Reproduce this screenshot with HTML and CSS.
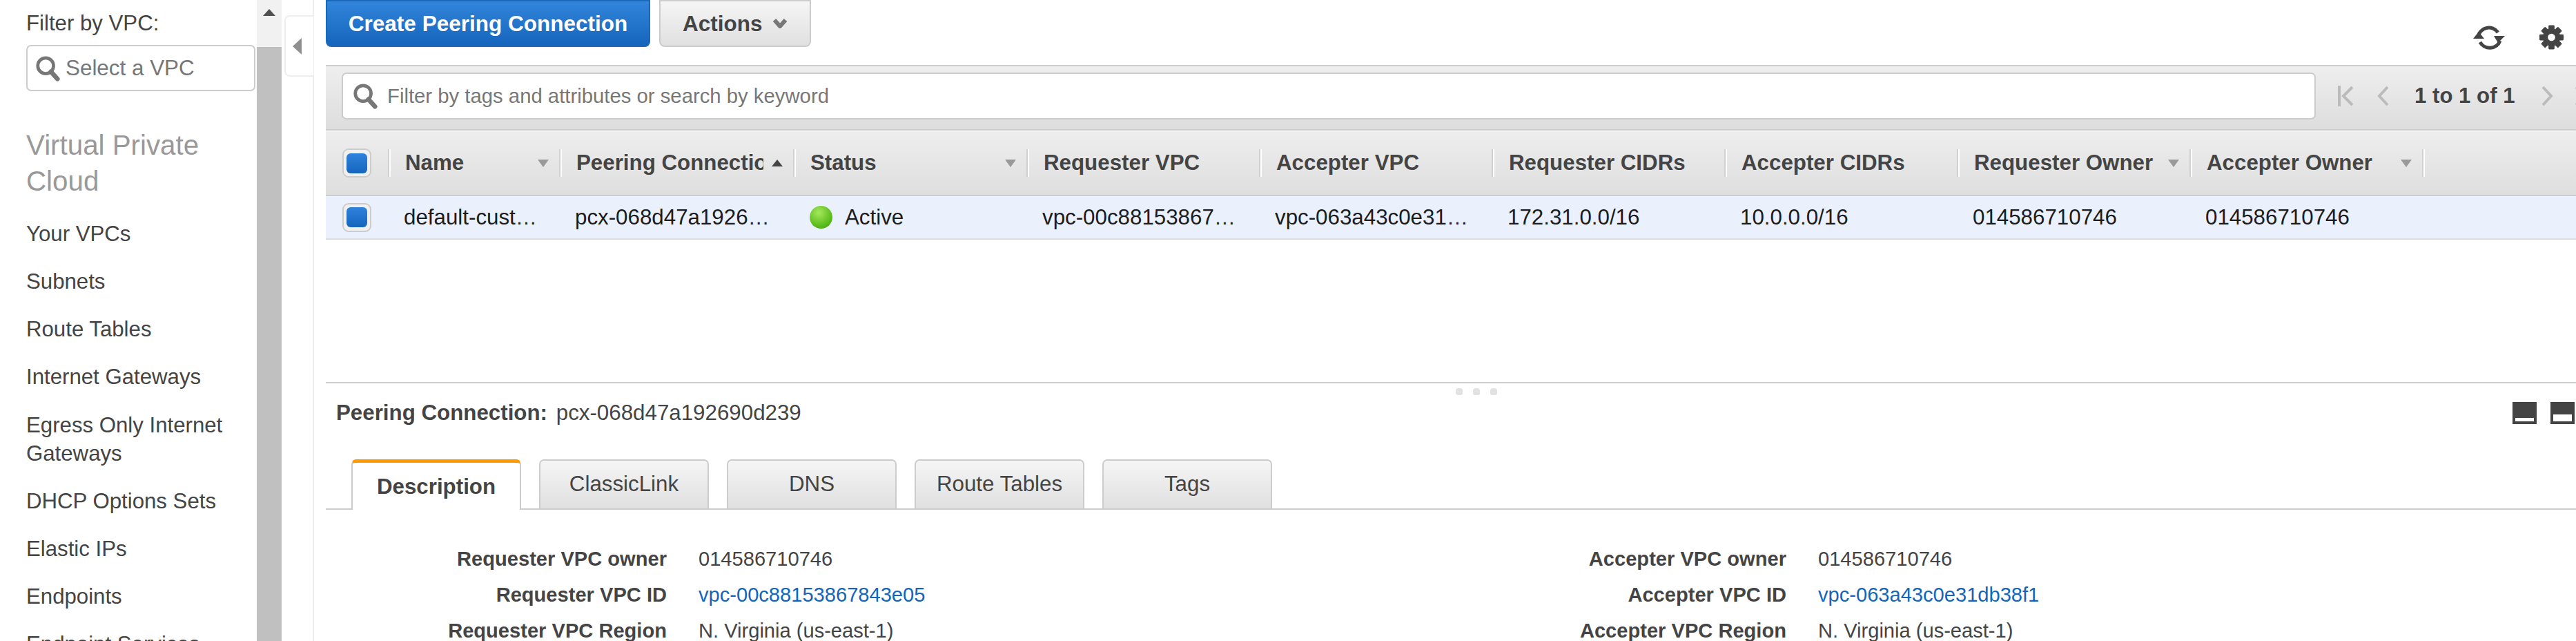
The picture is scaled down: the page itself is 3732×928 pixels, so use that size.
FILE: index.html
```html
<!DOCTYPE html>
<html lang="en">
<head>
  <meta charset="UTF-8" />
  <title>Peering Connections</title>
  <link rel="stylesheet" href="styles.css">
</head>
<body>
  <div class="app">

    <!-- left navigation -->
    <aside class="sidebar">
      <div class="nav">
        <div class="filter-label">Filter by VPC:</div>
        <div class="vpc-select">
          <svg class="search-icon" viewBox="0 0 40 40"><circle cx="17" cy="16" r="12" /><line x1="25" y1="25" x2="35" y2="36" /></svg>
          <span>Select a VPC</span>
        </div>
        <h2 class="nav-title">Virtual Private Cloud</h2>
        <a class="nav-item">Your VPCs</a>
        <a class="nav-item">Subnets</a>
        <a class="nav-item">Route Tables</a>
        <a class="nav-item">Internet Gateways</a>
        <a class="nav-item">Egress Only Internet Gateways</a>
        <a class="nav-item">DHCP Options Sets</a>
        <a class="nav-item">Elastic IPs</a>
        <a class="nav-item">Endpoints</a>
        <a class="nav-item">Endpoint Services</a>
      </div>
      <div class="scrollbar">
        <div class="scroll-up"></div>
        <div class="scroll-thumb"></div>
      </div>
    </aside>

    <div class="gutter">
      <div class="collapse-handle"><span class="collapse-arrow"></span></div>
    </div>

    <main class="main">
      <!-- action buttons -->
      <div class="topbar">
        <button class="btn btn-primary">Create Peering Connection</button>
        <button class="btn btn-actions">Actions
          <svg class="chevron" viewBox="0 0 22 14"><polyline points="3,2 11,11 19,2" /></svg>
        </button>
        <div class="top-icons">
          <svg class="refresh-icon" viewBox="0 0 48 38">
            <path class="arc" d="M8 19 A16 16 0 0 1 37 12" />
            <path class="arc" d="M40 24 A16 16 0 0 1 11 26" />
            <polygon points="31,17 47,17 37,27" />
            <polygon points="1,21 17,21 9,11" />
          </svg>
          <svg class="gear-icon" viewBox="0 0 36 36">
            <rect x="13.5" y="0" width="9" height="36" rx="1.5" />
            <rect x="13.5" y="0" width="9" height="36" rx="1.5" transform="rotate(45 18 18)" />
            <rect x="13.5" y="0" width="9" height="36" rx="1.5" transform="rotate(90 18 18)" />
            <rect x="13.5" y="0" width="9" height="36" rx="1.5" transform="rotate(135 18 18)" />
            <circle cx="18" cy="18" r="13" />
            <circle class="gear-hole" cx="18" cy="18" r="5.5" />
          </svg>
        </div>
      </div>

      <!-- search and pager -->
      <div class="toolbar">
        <div class="search-box">
          <svg class="search-icon" viewBox="0 0 40 40"><circle cx="17" cy="16" r="12" /><line x1="25" y1="25" x2="35" y2="36" /></svg>
          <span>Filter by tags and attributes or search by keyword</span>
        </div>
        <div class="pager">
          <svg class="page-first" viewBox="0 0 23 30"><line x1="2" y1="0" x2="2" y2="30" /><polyline points="21,2 8,15 21,28" /></svg>
          <svg class="page-step" viewBox="0 0 17 30"><polyline points="15,2 3,15 15,28" /></svg>
          <span class="page-text">1 to 1 of 1</span>
          <svg class="page-step" viewBox="0 0 17 30"><polyline points="2,2 14,15 2,28" /></svg>
          <svg class="page-first" viewBox="0 0 23 30"><polyline points="2,2 15,15 2,28" /><line x1="21" y1="0" x2="21" y2="30" /></svg>
        </div>
      </div>

      <!-- table -->
      <div class="grid-row table-head">
        <div class="check-cell"><span class="check"></span></div>
        <div class="th"><span class="th-label">Name</span><span class="caret"></span></div>
        <div class="th"><span class="th-label">Peering Connection ID</span><span class="caret caret-up"></span></div>
        <div class="th"><span class="th-label">Status</span><span class="caret"></span></div>
        <div class="th"><span class="th-label">Requester VPC</span></div>
        <div class="th"><span class="th-label">Accepter VPC</span></div>
        <div class="th"><span class="th-label">Requester CIDRs</span></div>
        <div class="th"><span class="th-label">Accepter CIDRs</span></div>
        <div class="th"><span class="th-label">Requester Owner</span><span class="caret"></span></div>
        <div class="th"><span class="th-label">Accepter Owner</span><span class="caret"></span></div>
        <div class="th"></div>
      </div>
      <div class="grid-row table-row">
        <div class="check-cell"><span class="check"></span></div>
        <div class="td">default-cust…</div>
        <div class="td">pcx-068d47a1926…</div>
        <div class="td status"><span class="status-dot"></span>Active</div>
        <div class="td">vpc-00c88153867…</div>
        <div class="td">vpc-063a43c0e31…</div>
        <div class="td">172.31.0.0/16</div>
        <div class="td">10.0.0.0/16</div>
        <div class="td">014586710746</div>
        <div class="td">014586710746</div>
      </div>
      <div class="table-space"></div>

      <!-- details pane -->
      <section class="details">
        <div class="drag-dots"><span></span><span></span><span></span></div>
        <div class="details-head">
          <div><b>Peering Connection:</b> pcx-068d47a192690d239</div>
          <div class="layout-icons">
            <span class="layout-btn layout-min"></span>
            <span class="layout-btn layout-half"></span>
          </div>
        </div>
        <div class="tabs">
          <div class="tab tab-active">Description</div>
          <div class="tab">ClassicLink</div>
          <div class="tab">DNS</div>
          <div class="tab">Route Tables</div>
          <div class="tab">Tags</div>
        </div>
        <div class="fields">
          <div class="field"><span class="field-label">Requester VPC owner</span><span>014586710746</span></div>
          <div class="field"><span class="field-label">Accepter VPC owner</span><span>014586710746</span></div>
          <div class="field"><span class="field-label">Requester VPC ID</span><a class="link">vpc-00c88153867843e05</a></div>
          <div class="field"><span class="field-label">Accepter VPC ID</span><a class="link">vpc-063a43c0e31db38f1</a></div>
          <div class="field"><span class="field-label">Requester VPC Region</span><span>N. Virginia (us-east-1)</span></div>
          <div class="field"><span class="field-label">Accepter VPC Region</span><span>N. Virginia (us-east-1)</span></div>
        </div>
      </section>
    </main>
  </div>
</body>
</html>
```

FILE: styles.css
```css
html, body {
  margin: 0;
  height: 100%;
  overflow: hidden;
}

body {
  font-family: "Liberation Sans", Arial, sans-serif;
  font-size: 29.1px;
  color: #444;
  background: #fff;
}

.app {
  display: flex;
  height: 928px;
  overflow: hidden;
}

/* sidebar */
.sidebar {
  display: flex;
  flex: none;
  width: 408px;
  height: 100%;
}

.nav {
  width: 372px;
  box-sizing: border-box;
  padding: 13px 0 0 38px;
  overflow: hidden;
  font-size: 31.2px;
  line-height: 41px;
}

.vpc-select {
  display: flex;
  align-items: center;
  gap: 7px;
  box-sizing: border-box;
  width: 332px;
  height: 67px;
  margin-top: 11px;
  padding-left: 10px;
  border: 2px solid #ccc;
  border-radius: 7px;
  color: #777;
  font-size: 31.4px;
}

.nav-title {
  margin: 53px 0 28.8px;
  font-size: 40.3px;
  font-weight: normal;
  line-height: 52px;
  color: #999;
}

.nav-item {
  display: block;
  margin-bottom: 28.2px;
  padding-right: 30px;
}

.scrollbar {
  display: flex;
  flex-direction: column;
  width: 36px;
  background: #f1f1f1;
}

.scroll-up {
  flex: none;
  width: 0;
  height: 0;
  margin: 13px auto 45px;
  border-left: 9px solid transparent;
  border-right: 9px solid transparent;
  border-bottom: 10px solid #505050;
}

.scroll-thumb {
  flex: 1;
  background: #c0c0c0;
}

.gutter {
  flex: none;
  width: 47px;
  padding-top: 22px;
  box-sizing: border-box;
  border-right: 2px solid #eee;
}

.collapse-handle {
  display: flex;
  align-items: center;
  justify-content: center;
  box-sizing: border-box;
  width: 42px;
  height: 89px;
  margin-left: 4px;
  border: 2px solid #eee;
  border-right: none;
  border-radius: 8px 0 0 8px;
  background: #fff;
}

.collapse-arrow {
  width: 0;
  height: 0;
  margin-right: 8px;
  border-top: 12px solid transparent;
  border-bottom: 12px solid transparent;
  border-right: 13px solid #8f8f8f;
}

/* main column */
.main {
  flex: 1;
  min-width: 0;
  padding-left: 17px;
}

.topbar {
  display: flex;
  height: 94px;
}

.btn {
  box-sizing: border-box;
  height: 68px;
  padding: 0;
  border-radius: 0 0 8px 8px;
  font-family: inherit;
  font-size: 31.5px;
  font-weight: bold;
}

.btn-primary {
  width: 470px;
  border: 2px solid #1b67b8;
  background: linear-gradient(#3285dc, #1565bc);
  color: #fff;
}

.btn-actions {
  display: flex;
  align-items: center;
  width: 220px;
  margin-left: 13px;
  padding-left: 32px;
  border: 2px solid #ccc;
  background: linear-gradient(#f5f5f5, #e0e0e0);
  color: #444;
}

.chevron {
  width: 22px;
  height: 14px;
  margin-left: 14px;
  fill: none;
  stroke: #777;
  stroke-width: 6;
}

.top-icons {
  display: flex;
  align-items: center;
  gap: 49px;
  height: 36px;
  margin-left: auto;
  margin-right: 18px;
  padding-top: 36px;
}

.refresh-icon {
  width: 48px;
  height: 38px;
  fill: #444;
}

.refresh-icon .arc {
  fill: none;
  stroke: #444;
  stroke-width: 5;
}

.gear-icon {
  width: 35px;
  height: 36px;
  fill: #444;
}

.gear-icon .gear-hole {
  fill: #fff;
}

.toolbar {
  display: flex;
  align-items: center;
  box-sizing: border-box;
  height: 95px;
  padding: 0 0 5px 23px;
  border-top: 2px solid #ccc;
  border-bottom: 2px solid #ccc;
  background: linear-gradient(#eee, #ddd);
}

.search-box {
  display: flex;
  flex: none;
  align-items: center;
  gap: 13px;
  box-sizing: border-box;
  width: 2860px;
  height: 68px;
  padding-left: 13px;
  border: 2px solid #ccc;
  border-radius: 7px;
  background: #fff;
  color: #777;
  font-size: 29.3px;
}

.search-icon {
  flex: none;
  width: 38px;
  height: 38px;
  fill: none;
  stroke: #777;
}

.search-icon circle {
  stroke-width: 5;
}

.search-icon line {
  stroke-width: 7;
  stroke-linecap: round;
}

.pager {
  display: flex;
  flex: none;
  align-items: center;
  margin-left: 32px;
  font-size: 31.2px;
  font-weight: bold;
  white-space: nowrap;
}

.pager svg {
  flex: none;
  height: 30px;
  fill: none;
  stroke: #bbb;
  stroke-width: 4;
}

.page-first {
  width: 23px;
  margin-right: 34px;
}

.page-step {
  width: 17px;
}

.page-text {
  margin: 0 38px 0 37px;
}

.page-text + .page-step {
  margin-right: 31px;
}

/* table */
.grid-row {
  display: grid;
  grid-template-columns: 90px 248px 339px 338px repeat(6, 337px) 40px;
  align-items: center;
  font-size: 31.3px;
  white-space: nowrap;
}

.table-head {
  box-sizing: border-box;
  height: 94px;
  margin-top: 1px;
  border-bottom: 2px solid #ccc;
  background: linear-gradient(#eee, #dedede);
  font-weight: bold;
}

.table-row {
  box-sizing: border-box;
  height: 63px;
  border-bottom: 2px solid #ddd;
  background: #eaf1fc;
  color: #1c1c1c;
}

.check-cell {
  padding-left: 24px;
}

.check {
  display: flex;
  align-items: center;
  justify-content: center;
  box-sizing: border-box;
  width: 42px;
  height: 42px;
  border: 2px solid #ccc;
  border-radius: 9px;
  background: #f0f0f0;
}

.check::after {
  content: "";
  width: 30px;
  height: 29px;
  border-radius: 6px;
  background: linear-gradient(#2f82dc, #1565bc);
}

.th {
  display: flex;
  align-items: center;
  box-sizing: border-box;
  height: 40px;
  padding: 0 15px 0 23px;
  border-left: 2px solid #d0d0d0;
  box-shadow: inset 2px 0 #fff;
}

.th-label {
  flex: 1;
  min-width: 0;
  overflow: hidden;
}

.caret {
  flex: none;
  width: 0;
  height: 0;
  margin-left: 12px;
  border-left: 8px solid transparent;
  border-right: 8px solid transparent;
  border-top: 11px solid #999;
}

.caret-up {
  border-top: none;
  border-bottom: 10px solid #444;
}

.td {
  padding-left: 23px;
}

.status {
  display: flex;
  align-items: center;
  padding-left: 24px;
}

.status-dot {
  width: 33px;
  height: 33px;
  margin-right: 18px;
  border-radius: 50%;
  background: radial-gradient(circle at 40% 30%, #a4e85c, #58bb1a 65%, #3e9a10);
}

.table-space {
  height: 206px;
}

/* details pane */
.details {
  position: relative;
  border-top: 2px solid #ccc;
}

.drag-dots {
  position: absolute;
  top: 7px;
  left: 1637px;
  display: flex;
  gap: 15px;
}

.drag-dots span {
  width: 10px;
  height: 10px;
  border-radius: 4px 4px 3px 3px;
  background: #e2e2e2;
}

.details-head {
  display: flex;
  align-items: center;
  justify-content: space-between;
  height: 86px;
  padding: 0 2px 0 15px;
  font-size: 31.3px;
}

.details-head b {
  margin-right: 4px;
}

.layout-icons {
  display: flex;
  gap: 20px;
}

.layout-btn {
  display: flex;
  align-items: flex-end;
  justify-content: center;
  box-sizing: border-box;
  width: 35px;
  height: 32px;
  padding: 0 4px 4px;
  background: #444;
}

.layout-btn::after {
  content: "";
  width: 100%;
  background: #fff;
}

.layout-min::after {
  height: 5px;
}

.layout-half::after {
  height: 10px;
}

.tabs {
  display: flex;
  gap: 26px;
  height: 71px;
  margin-top: 24px;
  padding-left: 37px;
  border-bottom: 2px solid #ccc;
  font-size: 31.3px;
}

.tab {
  box-sizing: border-box;
  width: 246px;
  height: 71px;
  border: 2px solid #ccc;
  border-bottom: none;
  border-radius: 7px 7px 0 0;
  background: linear-gradient(#f5f5f5, #e0e0e0);
  line-height: 67px;
  text-align: center;
}

.tab-active {
  height: 73px;
  border-top: 5px solid #f90;
  background: #fff;
  font-weight: bold;
  line-height: 70px;
}

.fields {
  display: grid;
  grid-template-columns: 1622px 1fr;
  margin-top: 45px;
  line-height: 52px;
}

.field {
  display: flex;
  gap: 46px;
  white-space: nowrap;
}

.field-label {
  width: 494px;
  font-weight: bold;
  text-align: right;
}

.link {
  color: #1166bb;
}
```
